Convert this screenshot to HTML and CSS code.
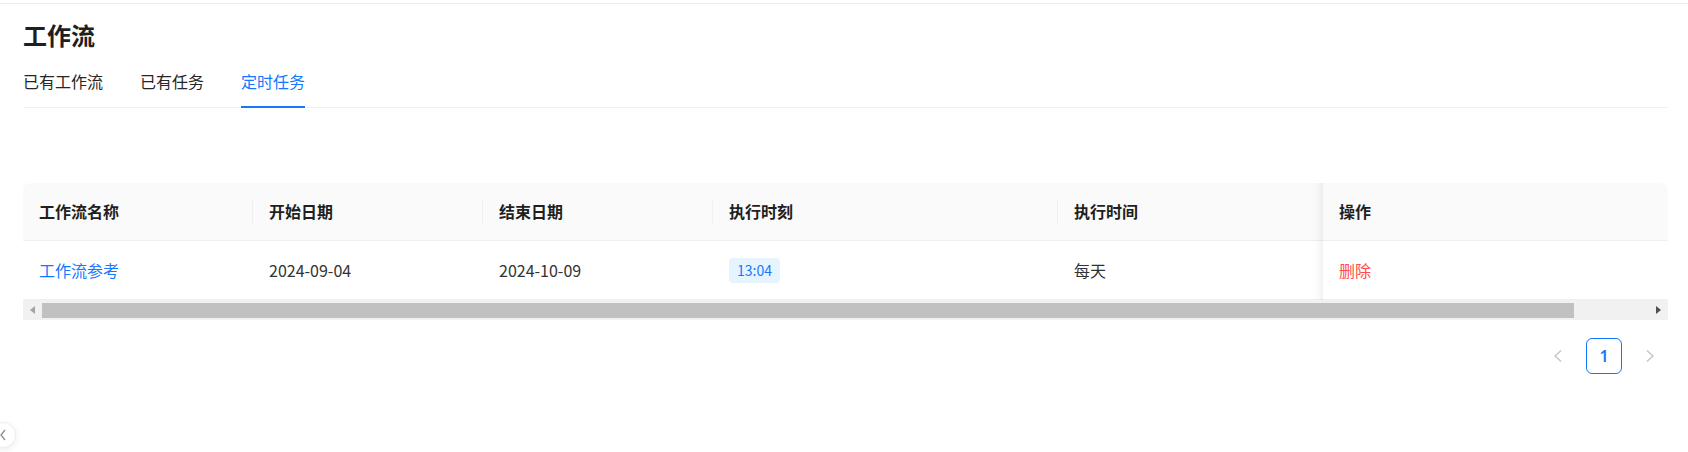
FILE: index.html
```html
<!DOCTYPE html>
<html lang="zh-CN">
<head>
  <meta charset="UTF-8">
  <title>工作流</title>
  <link rel="stylesheet" href="styles.css">
</head>
<body>
  <div class="topbar"></div>
  <div class="page">
    <h1 class="title">工作流</h1>
    <div class="tabs">
      <div class="tab">已有工作流</div>
      <div class="tab">已有任务</div>
      <div class="tab active">定时任务</div>
    </div>

    <div class="table-wrap">
      <table class="grid">
        <colgroup>
          <col class="c-name">
          <col class="c-date">
          <col class="c-date">
          <col class="c-time">
          <col class="c-freq">
          <col class="c-op">
        </colgroup>
        <thead>
          <tr>
            <th class="sep">工作流名称</th>
            <th class="sep">开始日期</th>
            <th class="sep">结束日期</th>
            <th class="sep">执行时刻</th>
            <th>执行时间</th>
            <th class="fixed">操作</th>
          </tr>
        </thead>
        <tbody>
          <tr>
            <td><a class="link" href="#">工作流参考</a></td>
            <td>2024-09-04</td>
            <td>2024-10-09</td>
            <td><span class="tag">13:04</span></td>
            <td>每天</td>
            <td class="fixed"><a class="danger" href="#">删除</a></td>
          </tr>
        </tbody>
      </table>
      <div class="hscroll">
        <div class="sb-btn"><span class="tri-left"></span></div>
        <div class="sb-thumb"></div>
        <div class="sb-rest"></div>
        <div class="sb-btn"><span class="tri-right"></span></div>
      </div>
    </div>

    <div class="pager">
      <div class="pg-item">
        <svg width="12" height="14" viewBox="0 0 12 14"><path d="M9 1.5 L3 7 L9 12.5" fill="none" stroke="#c4c4c4" stroke-width="1.4"/></svg>
      </div>
      <div class="pg-item current">1</div>
      <div class="pg-item">
        <svg width="12" height="14" viewBox="0 0 12 14"><path d="M3 1.5 L9 7 L3 12.5" fill="none" stroke="#c4c4c4" stroke-width="1.4"/></svg>
      </div>
    </div>
  </div>

  <div class="collapse-btn">
    <svg width="8" height="12" viewBox="0 0 8 12"><path d="M6 1 L2 6 L6 11" fill="none" stroke="#8c8c8c" stroke-width="1.3"/></svg>
  </div>
</body>
</html>
```

FILE: styles.css
```css
body {
  margin: 0;
  background: #fff;
  font-family: "Noto Sans CJK SC", "Noto Sans", sans-serif;
  color: rgba(0, 0, 0, 0.88);
  overflow: hidden;
  position: relative;
  height: 452px;
}
.topbar {
  height: 3px;
  border-bottom: 1px solid #ececec;
}
.page {
  padding: 0 20px 0 23px;
}
.title {
  margin: 15px 0 0;
  font-size: 24px;
  line-height: 32px;
  font-weight: 700;
  color: #1f1f1f;
}
.tabs {
  display: flex;
  gap: 37px;
  margin-top: 8px;
  border-bottom: 1px solid #f0f0f0;
}
.tab {
  font-size: 16px;
  line-height: 24px;
  padding: 10px 0 13px;
  border-bottom: 2px solid transparent;
  margin-bottom: -1px;
  color: #262626;
}
.tab.active {
  color: #1677ff;
  border-bottom-color: #1677ff;
}

.table-wrap {
  margin-top: 75px;
}
.grid {
  width: 100%;
  table-layout: fixed;
  border-collapse: separate;
  border-spacing: 0;
  font-size: 16px;
}
.c-name, .c-date { width: 230px; }
.c-time { width: 345px; }
.c-freq { width: 265px; }
.c-op { width: 345px; }

.grid th {
  position: relative;
  background: #fafafa;
  text-align: left;
  font-weight: 600;
  line-height: 25px;
  padding: 16px;
  border-bottom: 1px solid #f0f0f0;
  color: #1f1f1f;
}
.grid th:first-child { border-top-left-radius: 8px; }
.grid th:last-child { border-top-right-radius: 8px; }
.grid th.sep::before {
  content: "";
  position: absolute;
  right: 0;
  top: 50%;
  width: 1px;
  height: 24px;
  transform: translateY(-50%);
  background: #f0f0f0;
}
.grid td {
  line-height: 25px;
  padding: 17px 16px 16px;
  border-bottom: 1px solid #f0f0f0;
  color: #333;
}
.grid .fixed {
  position: relative;
}
.grid .fixed::after {
  content: "";
  position: absolute;
  left: 0;
  top: 0;
  bottom: -1px;
  width: 30px;
  transform: translateX(-100%);
  box-shadow: inset -10px 0 8px -8px rgba(5, 5, 5, 0.08);
  pointer-events: none;
}
.link {
  color: #1677ff;
  text-decoration: none;
}
.danger {
  color: #ff4d4f;
  text-decoration: none;
}
.tag {
  display: inline-block;
  vertical-align: top;
  height: 25px;
  line-height: 25px;
  padding: 0 8px;
  font-size: 14px;
  border-radius: 4px;
  background: #e6f4ff;
  color: #1677ff;
}

.hscroll {
  display: flex;
  align-items: center;
  height: 20px;
  background: #f1f1f1;
}
.sb-btn {
  width: 19px;
  height: 20px;
  display: flex;
  align-items: center;
  justify-content: center;
}
.sb-thumb {
  width: 1532px;
  height: 15px;
  align-self: flex-start;
  margin-top: 3px;
  background: #c1c1c1;
}
.sb-rest {
  flex: 1;
}
.tri-left {
  width: 0;
  height: 0;
  border-top: 4.5px solid transparent;
  border-bottom: 4.5px solid transparent;
  border-right: 5px solid #a3a3a3;
}
.tri-right {
  width: 0;
  height: 0;
  border-top: 4.5px solid transparent;
  border-bottom: 4.5px solid transparent;
  border-left: 5px solid #505050;
}

.pager {
  display: flex;
  justify-content: flex-end;
  gap: 10px;
  margin-top: 18px;
}
.pg-item {
  width: 36px;
  height: 36px;
  box-sizing: border-box;
  display: flex;
  align-items: center;
  justify-content: center;
  font-size: 16px;
}
.pg-item.current {
  border: 1px solid #1677ff;
  border-radius: 6px;
  color: #1677ff;
  font-weight: 600;
  font-family: "Noto Sans", sans-serif;
}

.collapse-btn {
  position: absolute;
  left: -10px;
  top: 422px;
  width: 24px;
  height: 24px;
  border-radius: 50%;
  background: #fff;
  border: 1px solid #eeeeee;
  box-shadow: 0 2px 6px rgba(0, 0, 0, 0.08);
  display: flex;
  align-items: center;
  justify-content: center;
}
```
